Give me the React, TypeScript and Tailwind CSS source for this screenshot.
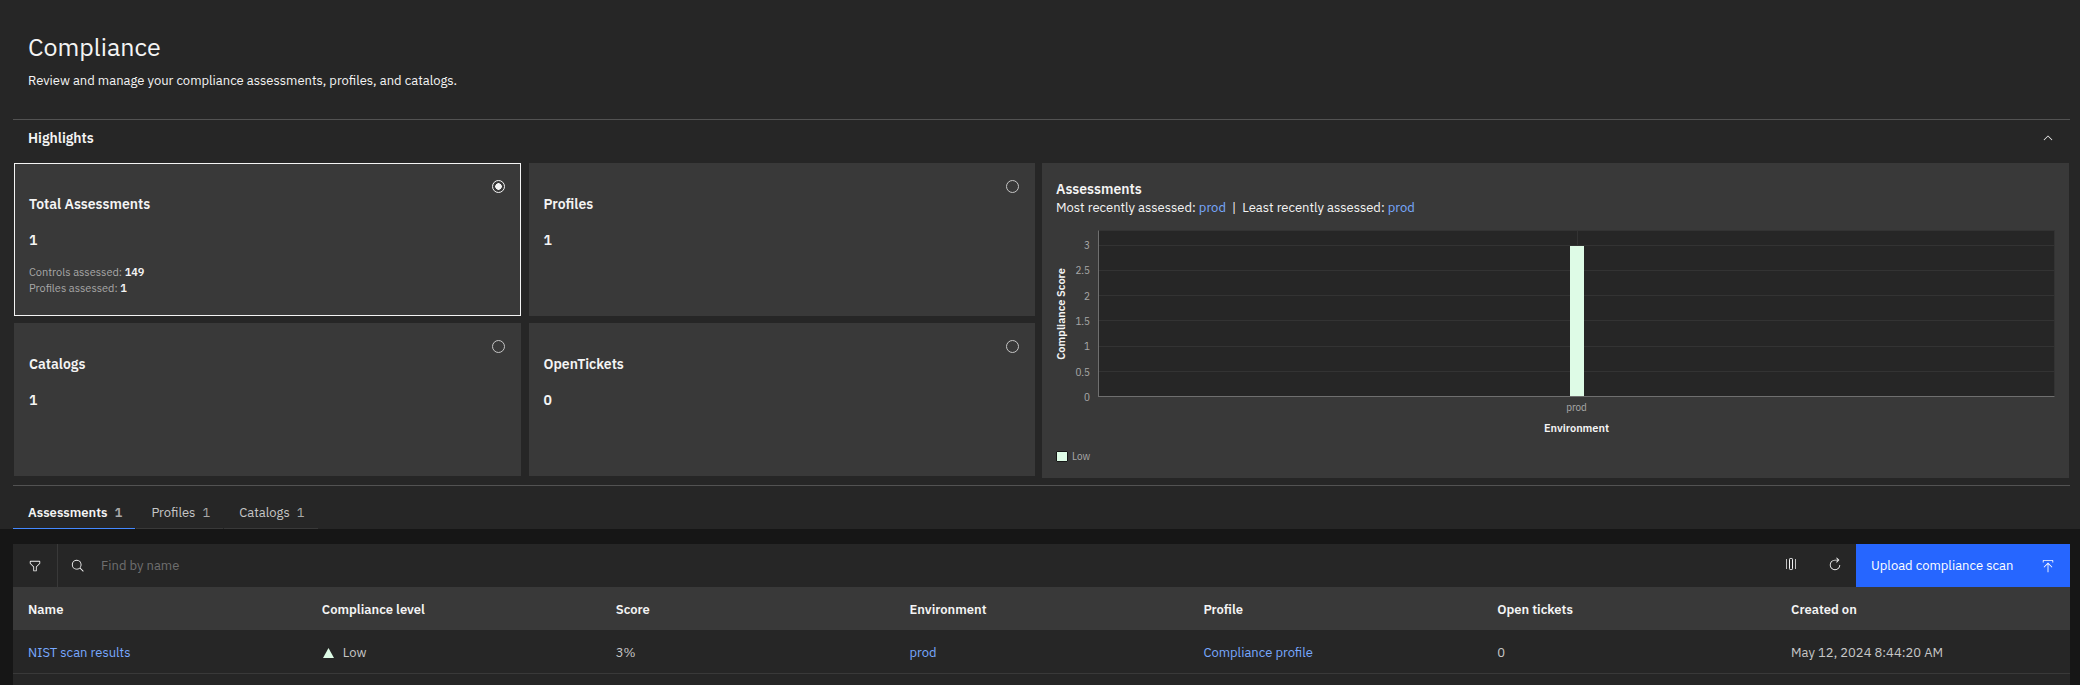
import { useState } from "react";
import type { ReactNode } from "react";

function Icon({ children }: { children: ReactNode }) {
  return (
    <svg viewBox="0 0 32 32" fill="currentColor" aria-hidden="true" className="size-[14px] shrink-0">
      {children}
    </svg>
  );
}

type TileData = { id: string; title: string; value: number; details: { label: string; amount: number }[] };

const TILES: TileData[] = [
  {
    id: "total",
    title: "Total Assessments",
    value: 1,
    details: [
      { label: "Controls assessed:", amount: 149 },
      { label: "Profiles assessed:", amount: 1 },
    ],
  },
  { id: "profiles", title: "Profiles", value: 1, details: [] },
  { id: "catalogs", title: "Catalogs", value: 1, details: [] },
  { id: "tickets", title: "OpenTickets", value: 0, details: [] },
];

const TABS = [
  { label: "Assessments", count: 1 },
  { label: "Profiles", count: 1 },
  { label: "Catalogs", count: 1 },
];

const COLUMNS = ["Name", "Compliance level", "Score", "Environment", "Profile", "Open tickets", "Created on"];
const TICKS = ["3", "2.5", "2", "1.5", "1", "0.5", "0"];

function Tile({ tile, selected, onSelect }: { tile: TileData; selected: boolean; onSelect: () => void }) {
  return (
    <label
      className={`flex h-[153px] cursor-pointer justify-between border bg-[#393939] pl-[14px] pr-[15px] ${
        selected ? "border-[#f4f4f4]" : "border-[#393939]"
      }`}
    >
      <span className="flex flex-col pt-[30px]">
        <span className="text-[14px] font-semibold leading-5">{tile.title}</span>
        <span className="mt-4 text-[14px] font-semibold leading-5">{tile.value}</span>
        <span className="mt-[14px] flex flex-col text-[11px] leading-4 text-[#a8a8a8]">
          {tile.details.map(({ label, amount }) => (
            <span key={label}>
              {label} <b className="font-semibold text-[#f4f4f4]">{amount}</b>
            </span>
          ))}
        </span>
      </span>
      <input
        type="radio"
        name="highlight"
        checked={selected}
        onChange={onSelect}
        className="mt-4 size-[13px] appearance-none rounded-full border border-[#c6c6c6] checked:border-[#f4f4f4] checked:bg-[radial-gradient(circle,#f4f4f4_3px,transparent_3.5px)]"
      />
    </label>
  );
}

function ScoreChart() {
  return (
    <section className="flex min-w-0 flex-col bg-[#393939] px-[14px] pb-[14px] pt-4">
      <h3 className="text-[14px] font-semibold leading-5">Assessments</h3>
      <p className="whitespace-pre text-[13px] leading-[18px]">
        Most recently assessed: <a href="#prod" className="text-[#78a9ff]">prod</a>
        {"  |  "}Least recently assessed: <a href="#prod" className="text-[#78a9ff]">prod</a>
      </p>
      <div className="mt-[13px] flex h-[167px]">
        <div className="flex w-[10px] items-center justify-center">
          <span className="rotate-180 whitespace-nowrap text-[11px] font-semibold leading-[10px] [writing-mode:vertical-rl]">
            Compliance Score
          </span>
        </div>
        <div className="-mb-[7px] mr-2 flex w-6 flex-col justify-between pt-2 text-right font-['IBM_Plex_Sans_Condensed','IBM_Plex_Sans',Roboto,sans-serif] text-[11px] leading-[14px] text-[#a8a8a8]">
          {TICKS.map((t) => (
            <span key={t}>{t}</span>
          ))}
        </div>
        <div className="relative min-w-0 flex-1 border border-b-[#6f6f6f] border-l-[#6f6f6f] border-r-[#333333] border-t-[#333333] bg-[#262626] pt-[14px]">
          <div className="flex h-full flex-col justify-between">
            {TICKS.map((t, i) => (
              <div key={t} className={i < 6 ? "h-px bg-[#333333]" : "h-0"} />
            ))}
          </div>
          <div className="absolute bottom-0 left-1/2 top-0 w-px bg-[#333333]" />
          <div className="absolute bottom-0 left-1/2 top-[15px] w-[14px] -translate-x-1/2 bg-[#defbe6]" />
        </div>
      </div>
      <div className="flex flex-col items-center pl-[42px] text-[11px] leading-4">
        <span className="mt-[2px] font-['IBM_Plex_Sans_Condensed','IBM_Plex_Sans',Roboto,sans-serif] text-[#a8a8a8]">
          prod
        </span>
        <span className="mt-[5px] font-semibold">Environment</span>
      </div>
      <div className="mt-3 flex items-center gap-1 font-['IBM_Plex_Sans_Condensed','IBM_Plex_Sans',Roboto,sans-serif] text-[11px] leading-4 text-[#a8a8a8]">
        <span className="h-[11px] w-3 rounded-[1px] border border-[#161616] bg-[#defbe6]" />
        Low
      </div>
    </section>
  );
}

export default function App() {
  const [selected, setSelected] = useState("total");
  const [tab, setTab] = useState("Assessments");
  return (
    <div className="min-h-screen bg-[#161616] font-['IBM_Plex_Sans',Roboto,sans-serif] text-[#f4f4f4]">
      <header className="bg-[#262626] pl-[13px] pr-[10px]">
        <div className="px-[15px] pb-[28px] pt-[30px]">
          <h1 className="text-[25px] font-normal leading-[34px]">Compliance</h1>
          <p className="mt-[7px] text-[13px] leading-5">
            Review and manage your compliance assessments, profiles, and catalogs.
          </p>
        </div>

        <section className="border-y border-[#525252] pb-[7px]">
          <div className="mb-[7px] flex h-9 items-center justify-between px-[15px]">
            <h2 className="text-[14px] font-semibold leading-5">Highlights</h2>
            <button aria-label="Collapse highlights" className="cursor-pointer">
              <Icon>
                <path d="M16 10 26 20l-1.4 1.4L16 12.8l-8.6 8.6L6 20z" />
              </Icon>
            </button>
          </div>
          <div className="grid grid-cols-[1021fr_1027fr] gap-[7px] px-px">
            <div className="grid grid-cols-2 content-start gap-x-2 gap-y-[7px]">
              {TILES.map((t) => (
                <Tile key={t.id} tile={t} selected={selected === t.id} onSelect={() => setSelected(t.id)} />
              ))}
            </div>
            <ScoreChart />
          </div>
        </section>

        <div role="tablist" className="flex gap-px pt-3">
          {TABS.map((t) => {
            const active = t.label === tab;
            return (
              <button
                key={t.label}
                role="tab"
                aria-selected={active}
                onClick={() => setTab(t.label)}
                className={`flex h-[31px] cursor-pointer items-center gap-[7px] border-b pl-[15px] pr-[13px] text-[13px] leading-5 ${
                  active ? "border-[#4589ff] font-semibold text-[#f4f4f4]" : "border-[#393939] text-[#c6c6c6]"
                }`}
              >
                {t.label}
                <span className="text-[#a8a8a8]">{t.count}</span>
              </button>
            );
          })}
        </div>
      </header>

      <main className="pl-[13px] pr-[10px] pt-[15px]">
        <div className="flex h-[43px] bg-[#262626] text-[13px]">
          <button
            aria-label="Filter"
            className="flex w-[45px] cursor-pointer items-center justify-center border-r border-[#393939]"
          >
            <Icon>
              <path d="M18,28H14a2,2,0,0,1-2-2V18.41L4.59,11A2,2,0,0,1,4,9.59V6A2,2,0,0,1,6,4H26a2,2,0,0,1,2,2V9.59A2,2,0,0,1,27.41,11L20,18.41V26A2,2,0,0,1,18,28ZM6,6V9.59l8,8V26h4V17.59l8-8V6Z" />
            </Icon>
          </button>
          <label className="flex min-w-0 flex-1 items-center gap-4 pl-[13px]">
            <Icon>
              <path d="M29,27.5859l-7.5521-7.5521a11.0177,11.0177,0,1,0-1.4141,1.4141L27.5859,29ZM4,13a9,9,0,1,1,9,9A9.01,9.01,0,0,1,4,13Z" />
            </Icon>
            <input
              type="text"
              aria-label="Find by name"
              placeholder="Find by name"
              className="h-full min-w-0 flex-1 bg-transparent outline-none placeholder:text-[#6f6f6f]"
            />
          </label>
          <button aria-label="Columns" className="flex w-11 cursor-pointer items-center justify-center pb-[3px]">
            <svg viewBox="0 0 14 14" fill="none" stroke="currentColor" aria-hidden="true" className="size-[14px]">
              <path d="M2.5 2v10M11.500 2v10" opacity=".75" />
              <rect x="5.500" y="1.500" width="3" height="11" rx=".8" />
            </svg>
          </button>
          <button aria-label="Refresh" className="flex w-[43px] cursor-pointer items-center justify-center pb-[3px]">
            <Icon>
              <path d="M26,18A10,10,0,1,1,16,8h6.1821l-3.5844,3.5854L20,13l6-6L20,1,18.5977,2.414,22.1851,6H16A12,12,0,1,0,28,18Z" />
            </Icon>
          </button>
          <button className="flex w-[214px] cursor-pointer items-center justify-between bg-[#2666ff] px-[15px] text-white">
            Upload compliance scan
            <Icon>
              <path d="M6 18L7.41 19.41 15 11.83 15 30 17 30 17 11.83 24.59 19.41 26 18 16 8 6 18zM6 8V4H26V8h2V4a2,2,0,0,0-2-2H6A2,2,0,0,0,4,4V8Z" />
            </Icon>
          </button>
        </div>
        <table className="w-full table-fixed border-collapse text-left text-[13px] leading-5">
          <thead className="bg-[#393939]">
            <tr className="h-[43px]">
              {COLUMNS.map((c) => (
                <th key={c} className="px-[15px] pt-[3px] font-semibold">
                  {c}
                </th>
              ))}
            </tr>
          </thead>
          <tbody className="bg-[#262626] text-[#c6c6c6]">
            <tr className="h-[43px] border-b border-[#393939] [&>td]:px-[15px] [&>td]:pt-[3px]">
              <td>
                <a href="#nist" className="text-[#78a9ff]">NIST scan results</a>
              </td>
              <td>
                <span className="flex items-center gap-2">
                  <svg viewBox="0 0 13 12" aria-hidden="true" className="h-3 w-[13px]">
                    <path d="M6.5 1 12 11H1z" fill="#defbe6" />
                  </svg>
                  Low
                </span>
              </td>
              <td>3%</td>
              <td>
                <a href="#prod" className="text-[#78a9ff]">prod</a>
              </td>
              <td>
                <a href="#profile" className="text-[#78a9ff]">Compliance profile</a>
              </td>
              <td>0</td>
              <td>May 12, 2024 8:44:20 AM</td>
            </tr>
          </tbody>
        </table>
        <div className="h-3 bg-[#262626]" />
      </main>
    </div>
  );
}
